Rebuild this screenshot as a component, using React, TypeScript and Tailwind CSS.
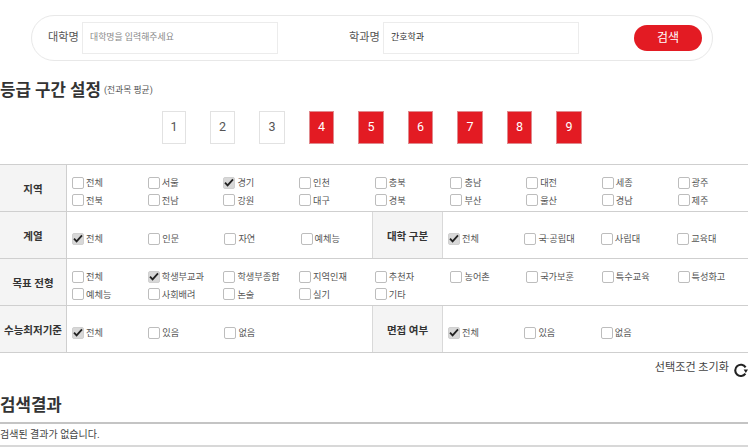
import React from 'react';

const FONT = 'font-["Roboto","Noto_Sans_CJK_KR",sans-serif]';

const Check = ({ label, checked }: { label: string; checked?: boolean }) => (
  <div className="flex items-center h-[17.6px] min-w-0">
    <span
      className={`w-[12px] h-[12px] rounded-[2px] border flex items-center justify-center shrink-0 ${
        checked ? 'bg-[#d8d8d8] border-[#d0d0d0]' : 'bg-white border-[#bdbdbd]'
      }`}
    >
      {checked && (
        <svg width="10" height="9" viewBox="0 0 10 9">
          <path d="M1 4.6 L3.6 7.4 L9 1.4" fill="none" stroke="#222" strokeWidth="1.8" />
        </svg>
      )}
    </span>
    <span className="ml-[2px] text-[9.2px] text-[#555] leading-none whitespace-nowrap">{label}</span>
  </div>
);

const Label = ({ children, wide }: { children: React.ReactNode; wide?: boolean }) => (
  <div
    className={`flex items-center justify-center bg-[#f4f4f4] text-[10.5px] font-bold text-[#333] shrink-0 pt-[3px] ${
      wide ? 'w-[71px] border-x border-[#d9d9d9]' : 'w-[67px] border-r border-[#cfcfcf]'
    }`}
  >
    {children}
  </div>
);

const Row = ({ children }: { children: React.ReactNode }) => (
  <div className="flex h-[47px] border-b border-[#cfcfcf]">{children}</div>
);

const Options = ({ items, checked, className }: { items: string[]; checked?: string; className: string }) => (
  <div className={`grid content-center pl-[5px] pt-[7px] ${className}`}>
    {items.map(item => (
      <Check key={item} label={item} checked={item === checked} />
    ))}
  </div>
);

const App: React.FC = () => {
  const grades = [1, 2, 3, 4, 5, 6, 7, 8, 9];

  return (
    <div className={`w-[748px] h-[448px] overflow-hidden bg-white ${FONT}`}>
      <div className="pt-[15px] pl-[31px]">
        <div className="flex items-center w-[682px] h-[46px] border border-[#e8e8e8] rounded-[23px]">
          <span className="ml-[16px] w-[34px] text-[11.2px] text-[#555] whitespace-nowrap">대학명</span>
          <div className="w-[196px] h-[32px] border border-[#ececec] flex items-center pl-[7px] text-[8.9px] text-[#888]">
            대학명을 입력해주세요
          </div>
          <span className="ml-[71px] w-[34px] text-[11.2px] text-[#555] whitespace-nowrap">학과명</span>
          <div className="w-[196px] h-[32px] border border-[#ececec] flex items-center pl-[7px] text-[9px] text-[#333]">
            간호학과
          </div>
          <button className="ml-[55px] w-[68px] h-[26px] rounded-[13px] bg-[#e31b23] text-white text-[12px]">검색</button>
        </div>
      </div>

      <div className="flex items-center mt-[17px] h-[26px]">
        <h2 className="text-[16.8px] font-bold text-[#333]">등급 구간 설정</h2>
        <span className="ml-[3px] text-[8.8px] text-[#555]">(전과목 평균)</span>
      </div>

      <div className="flex gap-[24.1px] pl-[162px] mt-[7px]">
        {grades.map(g => (
          <div
            key={g}
            className={`h-[33px] flex items-center justify-center text-[12.5px] border ${g === 1 ? 'w-[23.8px]' : 'w-[25.4px]'} ${
              g > 3 ? 'bg-[#e31b23] border-[#e08a8e] text-white' : 'bg-white border-[#e2e2e2] text-[#555]'
            }`}
          >
            {g}
          </div>
        ))}
      </div>

      <div className="mt-[20px] border-t border-[#cfcfcf]">
        <Row>
          <Label>지역</Label>
          <Options
            className="grid-cols-[repeat(9,75.7px)]"
            checked="경기"
            items={['전체', '서울', '경기', '인천', '충북', '충남', '대전', '세종', '광주', '전북', '전남', '강원', '대구', '경북', '부산', '울산', '경남', '제주']}
          />
        </Row>
        <Row>
          <Label>계열</Label>
          <Options className="w-[305px] grid-cols-[repeat(4,76.2px)]" checked="전체" items={['전체', '인문', '자연', '예체능']} />
          <Label wide>대학 구분</Label>
          <Options className="w-[305px] grid-cols-[repeat(4,76.4px)]" checked="전체" items={['전체', '국·공립대', '사립대', '교육대']} />
        </Row>
        <Row>
          <Label>목표 전형</Label>
          <Options
            className="grid-cols-[repeat(9,75.7px)]"
            checked="학생부교과"
            items={['전체', '학생부교과', '학생부종합', '지역인재', '추천자', '농어촌', '국가보훈', '특수교육', '특성화고', '예체능', '사회배려', '논술', '실기', '기타']}
          />
        </Row>
        <Row>
          <Label>수능최저기준</Label>
          <Options className="w-[305px] grid-cols-[repeat(4,76.2px)]" checked="전체" items={['전체', '있음', '없음']} />
          <Label wide>면접 여부</Label>
          <Options className="w-[305px] grid-cols-[repeat(4,76.4px)]" checked="전체" items={['전체', '있음', '없음']} />
        </Row>
      </div>

      <div className="flex items-center justify-end h-[30px] text-[11.1px] text-[#444]">
        <span>선택조건 초기화</span>
        <svg className="ml-[5px] mt-[3px]" width="14" height="14" viewBox="0 0 14 14">
          <path d="M11.4 10.6 A5.6 5.6 0 1 1 11.6 4.4" fill="none" stroke="#222" strokeWidth="2.1" />
          <path d="M9.6 6.4 L14 6.4 L11.8 10 Z" fill="#222" />
        </svg>
      </div>

      <h2 className="mt-[8px] h-[28px] mb-[3px] text-[16.8px] font-bold text-[#333] leading-[28px]">검색결과</h2>
      <div className="border-t-2 border-[#c4c4c4] border-b-2 border-b-[#d8d8d8] h-[25px] flex items-center text-[10px] text-[#444]">
        검색된 결과가 없습니다.
      </div>
    </div>
  );
};

export default App;
